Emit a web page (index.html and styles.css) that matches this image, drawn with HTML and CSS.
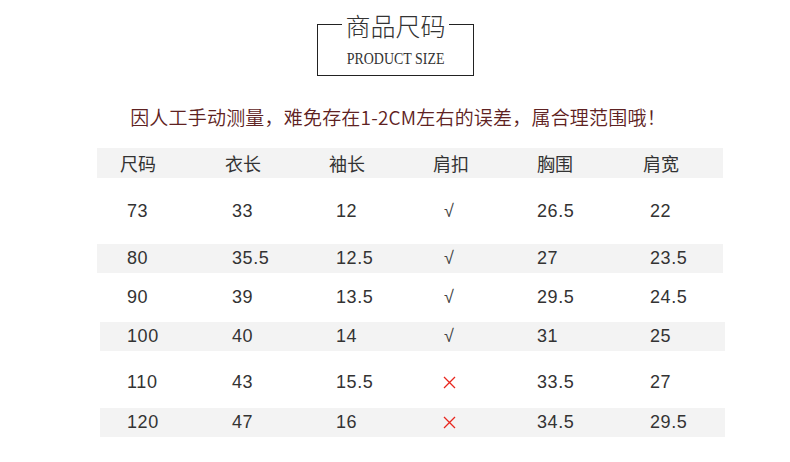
FILE: index.html
```html
<!DOCTYPE html>
<html lang="zh">
<head>
<meta charset="utf-8">
<title>商品尺码</title>
<link rel="stylesheet" href="styles.css">
</head>
<body>
<div class="page">
  <div class="title-box">
    <h1 class="title">商品尺码</h1>
    <div class="subtitle">PRODUCT SIZE</div>
  </div>
  <p class="note">因人工手动测量，难免存在1-2CM左右的误差，属合理范围哦！</p>
  <div class="table">
    <div class="row head">
      <div class="cell">尺码</div><div class="cell">衣长</div><div class="cell">袖长</div><div class="cell">肩扣</div><div class="cell">胸围</div><div class="cell">肩宽</div>
    </div>
    <div class="row data tall">
      <div class="cell">73</div><div class="cell">33</div><div class="cell">12</div><div class="cell mark">√</div><div class="cell c5">26.5</div><div class="cell">22</div>
    </div>
    <div class="row data shade">
      <div class="cell">80</div><div class="cell">35.5</div><div class="cell">12.5</div><div class="cell mark">√</div><div class="cell c5">27</div><div class="cell">23.5</div>
    </div>
    <div class="row data mid">
      <div class="cell">90</div><div class="cell">39</div><div class="cell">13.5</div><div class="cell mark">√</div><div class="cell c5">29.5</div><div class="cell">24.5</div>
    </div>
    <div class="row data shade shift">
      <div class="cell">100</div><div class="cell">40</div><div class="cell">14</div><div class="cell mark">√</div><div class="cell c5">31</div><div class="cell">25</div>
    </div>
    <div class="row data big">
      <div class="cell">110</div><div class="cell">43</div><div class="cell">15.5</div><div class="cell mark"><svg class="cross" width="13" height="13" viewBox="0 0 13 13"><path d="M1 1L12 12M12 1L1 12" stroke="#e8261e" stroke-width="1.3" fill="none"/></svg></div><div class="cell c5">33.5</div><div class="cell">27</div>
    </div>
    <div class="row data shade shift">
      <div class="cell">120</div><div class="cell">47</div><div class="cell">16</div><div class="cell mark"><svg class="cross" width="13" height="13" viewBox="0 0 13 13"><path d="M1 1L12 12M12 1L1 12" stroke="#e8261e" stroke-width="1.3" fill="none"/></svg></div><div class="cell c5">34.5</div><div class="cell">29.5</div>
    </div>
  </div>
</div>
</body>
</html>
```
FILE: styles.css
```css
html, body {
  margin: 0;
  padding: 0;
  background: #fff;
}
.page {
  width: 790px;
  height: 462px;
  font-family: "Liberation Sans", "Noto Sans CJK SC", sans-serif;
  color: #333;
  display: flex;
  flex-direction: column;
  overflow: hidden;
}
.title-box {
  align-self: center;
  margin-top: 24px;
  margin-left: 1px;
  width: 155px;
  height: 50px;
  border: 1px solid #222;
  display: flex;
  flex-direction: column;
  align-items: center;
}
.title {
  margin: -14px 0 0;
  padding: 0 3px;
  background: #fff;
  font-family: "Noto Sans CJK SC", sans-serif;
  font-weight: 300;
  font-size: 25px;
  line-height: 28px;
  color: #333;
}
.subtitle {
  margin-top: 10px;
  font-family: "Liberation Serif", serif;
  font-size: 17px;
  line-height: 20px;
  color: #333;
  transform: scaleX(0.82);
  white-space: nowrap;
}
.note {
  margin: 29px 0 0 6px;
  text-align: center;
  font-family: "Noto Sans CJK SC", sans-serif;
  font-weight: 350;
  font-size: 19px;
  line-height: 24px;
  color: #5e2222;
  letter-spacing: 0.2px;
}
.table {
  margin: 19px 0 0 97px;
  width: 626px;
  display: flex;
  flex-direction: column;
}
.row {
  display: grid;
  grid-template-columns: 105px 104px 104px 104px 106px 1fr;
  padding-left: 23px;
  align-items: center;
}
.head {
  height: 30px;
  background: #f3f3f3;
  font-family: "Noto Sans CJK SC", sans-serif;
  font-size: 18px;
}
.data {
  font-size: 18px;
  letter-spacing: 0.6px;
}
.data .cell {
  padding-left: 7px;
}
.data .cell.c5 {
  padding-left: 0;
}
.data .cell.mark {
  padding-left: 11px;
  font-size: 18px;
  color: #444;
  display: flex;
  align-items: center;
}
.cross {
  display: block;
  margin-left: -1px;
}
.tall { height: 66px; }
.mid { height: 49px; }
.big { height: 57px; padding-top: 6px; box-sizing: border-box; }
.shade {
  height: 29px;
  background: #f3f3f3;
}
.shift {
  margin-left: 3px;
  margin-right: -2px;
  padding-left: 20px;
}
```
